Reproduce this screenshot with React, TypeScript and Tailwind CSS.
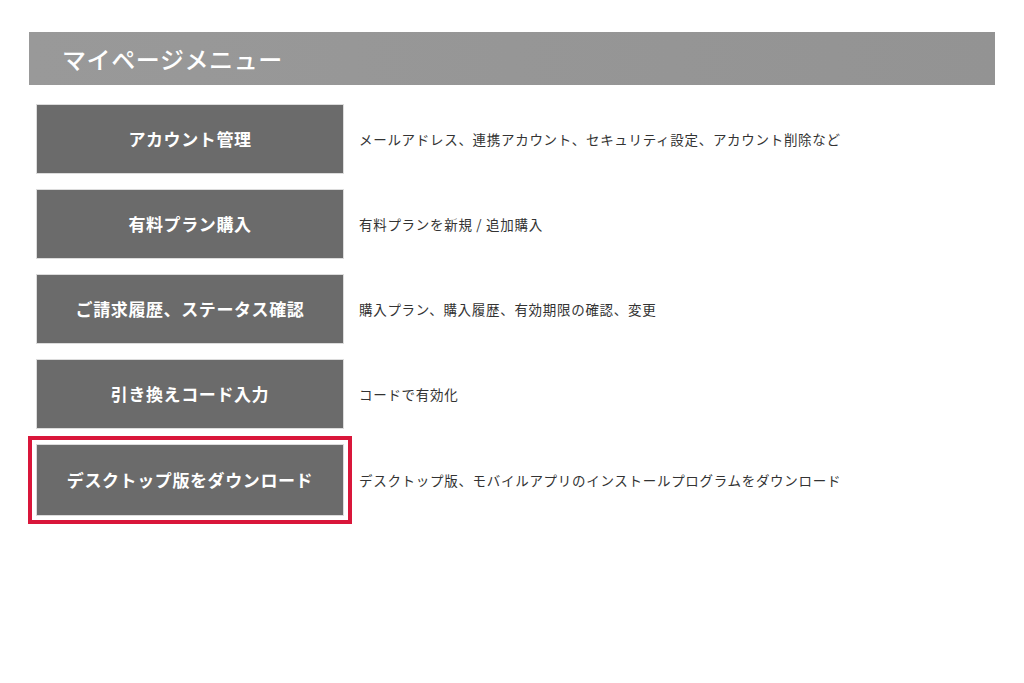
const items = [
  { label: 'アカウント管理', desc: 'メールアドレス、連携アカウント、セキュリティ設定、アカウント削除など' },
  { label: '有料プラン購入', desc: '有料プランを新規 / 追加購入' },
  { label: 'ご請求履歴、ステータス確認', desc: '購入プラン、購入履歴、有効期限の確認、変更' },
  { label: '引き換えコード入力', desc: 'コードで有効化' },
  { label: 'デスクトップ版をダウンロード', desc: 'デスクトップ版、モバイルアプリのインストールプログラムをダウンロード', highlight: true },
]

export default function App() {
  return (
    <div className="min-h-screen w-[1024px] h-[683px] bg-white pt-8 font-['Noto_Sans_CJK_JP','Noto_Sans',sans-serif]">
      <div className="ml-[29px] w-[966px] h-[53px] bg-gradient-to-r from-[#999] to-[#939393] flex items-center pl-[33px]">
        <h1 className="text-[24px] tracking-[0.6px] font-medium text-white leading-none">マイページメニュー</h1>
      </div>
      <div className="ml-[36px] mt-[19px] flex flex-col gap-[15px]">
        {items.map((item) => (
          <div key={item.label} className="flex items-center gap-[15px]">
            <div
              className={
                item.highlight
                  ? 'w-[308px] h-[72px] bg-[#6b6b6b] border border-[#dcdcdc] flex items-center justify-center outline-4 outline-offset-4 outline-[#d9163a]'
                  : 'w-[308px] h-[70px] bg-[#6b6b6b] border border-[#dcdcdc] flex items-center justify-center'
              }
            >
              <span className="text-white text-[17px] font-bold tracking-[0.6px]">{item.label}</span>
            </div>
            <p className="text-[#333] text-[13.5px] tracking-[0.7px]">{item.desc}</p>
          </div>
        ))}
      </div>
    </div>
  )
}
